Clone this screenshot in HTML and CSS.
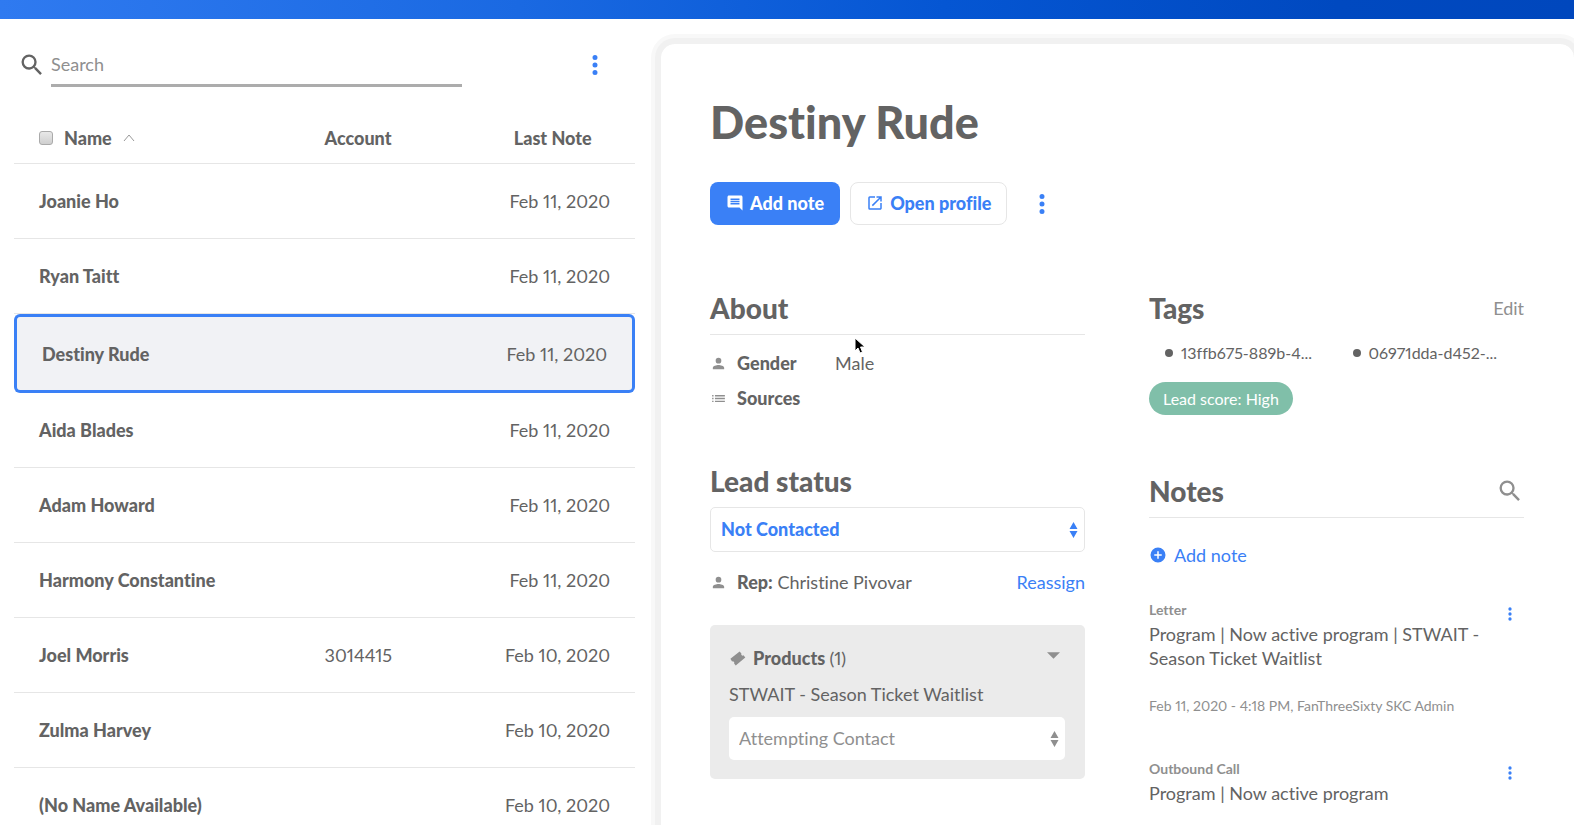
FILE: index.html
```html
<!DOCTYPE html>
<html lang="en">
<head>
    <meta charset="UTF-8">
    <meta name="viewport" content="width=device-width, initial-scale=1.0">
    <title>Leads</title>
    <link rel="stylesheet" href="styles.css">
</head>
<body>
    <svg class="sprite" aria-hidden="true">
        <symbol id="icon-search" viewBox="0 0 24 24">
            <path d="M15.5 14h-.79l-.28-.27A6.47 6.47 0 0 0 16 9.5 6.5 6.5 0 1 0 9.5 16c1.61 0 3.09-.59 4.23-1.57l.27.28v.79l5 4.99L20.49 19l-4.99-5zm-6 0a4.5 4.5 0 1 1 0-9 4.5 4.5 0 0 1 0 9z"/>
        </symbol>
        <symbol id="icon-more" viewBox="0 0 24 24">
            <path d="M12 8a2 2 0 1 0 0-4 2 2 0 0 0 0 4zm0 2a2 2 0 1 0 0 4 2 2 0 0 0 0-4zm0 6a2 2 0 1 0 0 4 2 2 0 0 0 0-4z"/>
        </symbol>
        <symbol id="icon-person" viewBox="0 0 24 24">
            <path d="M12 12a4 4 0 1 0 0-8 4 4 0 0 0 0 8zm0 2c-2.67 0-8 1.34-8 4v2h16v-2c0-2.66-5.33-4-8-4z"/>
        </symbol>
        <symbol id="icon-list" viewBox="0 0 24 24">
            <path d="M3 13h2v-2H3v2zm0 4h2v-2H3v2zm0-8h2V7H3v2zm4 4h14v-2H7v2zm0 4h14v-2H7v2zM7 7v2h14V7H7z"/>
        </symbol>
        <symbol id="icon-note" viewBox="0 0 24 24">
            <path d="M21.99 4c0-1.1-.89-2-1.99-2H4c-1.1 0-2 .9-2 2v12c0 1.1.9 2 2 2h14l4 4-.01-18zM18 14H6v-2h12v2zm0-3H6V9h12v2zm0-3H6V6h12v2z"/>
        </symbol>
        <symbol id="icon-open" viewBox="0 0 24 24">
            <path d="M19 19H5V5h7V3H5a2 2 0 0 0-2 2v14a2 2 0 0 0 2 2h14c1.1 0 2-.9 2-2v-7h-2v7zM14 3v2h3.59l-9.83 9.83 1.41 1.41L19 6.41V10h2V3h-7z"/>
        </symbol>
        <symbol id="icon-add" viewBox="0 0 24 24">
            <path d="M12 2a10 10 0 1 0 0 20 10 10 0 0 0 0-20zm5 11h-4v4h-2v-4H7v-2h4V7h2v4h4v2z"/>
        </symbol>
        <symbol id="icon-ticket" viewBox="0 0 24 24">
            <path d="M2 12.500 15 2l2.500 3a2 2 0 0 0 3 2.500L23 10.500 9.500 22l-2.300-3a2 2 0 0 0-2.900-2.600z"/>
        </symbol>
    </svg>

    <header class="topbar"></header>

    <div class="layout">
        <section class="leads">
            <div class="toolbar">
                <label class="search">
                    <svg class="search-icon"><use href="#icon-search"/></svg>
                    <input type="text" placeholder="Search" aria-label="Search">
                </label>
                <button class="icon-btn" aria-label="List options">
                    <svg class="icon-more"><use href="#icon-more"/></svg>
                </button>
            </div>

            <table class="leads-table">
                <thead>
                    <tr>
                        <th class="col-name">
                            <div class="name-head">
                                <input type="checkbox" aria-label="Select all">
                                Name
                                <svg class="sort" viewBox="0 0 12 8"><path d="M1 7l5-6 5 6"/></svg>
                            </div>
                        </th>
                        <th class="col-account">Account</th>
                        <th class="col-date">Last Note</th>
                    </tr>
                </thead>
                <tbody>
                    <tr><td>Joanie Ho</td><td></td><td>Feb 11, 2020</td></tr>
                    <tr><td>Ryan Taitt</td><td></td><td>Feb 11, 2020</td></tr>
                    <tr class="selected"><td>Destiny Rude</td><td></td><td>Feb 11, 2020</td></tr>
                    <tr><td>Aida Blades</td><td></td><td>Feb 11, 2020</td></tr>
                    <tr><td>Adam Howard</td><td></td><td>Feb 11, 2020</td></tr>
                    <tr><td>Harmony Constantine</td><td></td><td>Feb 11, 2020</td></tr>
                    <tr><td>Joel Morris</td><td>3014415</td><td>Feb 10, 2020</td></tr>
                    <tr><td>Zulma Harvey</td><td></td><td>Feb 10, 2020</td></tr>
                    <tr><td>(No Name Available)</td><td></td><td>Feb 10, 2020</td></tr>
                </tbody>
            </table>
        </section>

        <main class="panel">
            <h1>Destiny Rude</h1>
            <div class="actions">
                <button class="btn btn-primary"><svg><use href="#icon-note"/></svg>Add note</button>
                <button class="btn btn-open"><svg><use href="#icon-open"/></svg>Open profile</button>
                <button class="icon-btn" aria-label="More actions">
                    <svg class="icon-more"><use href="#icon-more"/></svg>
                </button>
            </div>

            <div class="columns">
                <div class="column">
                    <section class="about">
                        <h2 class="ruled">About</h2>
                        <dl class="facts">
                            <dt><svg class="fact-icon"><use href="#icon-person"/></svg>Gender</dt>
                            <dd>Male</dd>
                            <dt><svg class="fact-icon"><use href="#icon-list"/></svg>Sources</dt>
                            <dd></dd>
                        </dl>
                    </section>

                    <section class="status">
                        <h2>Lead status</h2>
                        <div class="select">
                            <select aria-label="Lead status">
                                <option>Not Contacted</option>
                            </select>
                            <svg viewBox="0 0 8 18"><path d="M0 8l4-7 4 7zM0 10l4 7 4-7z"/></svg>
                        </div>
                        <div class="rep">
                            <svg class="fact-icon"><use href="#icon-person"/></svg>
                            <span><b>Rep:</b> Christine Pivovar</span>
                            <a href="#">Reassign</a>
                        </div>
                    </section>

                    <section class="products">
                        <div class="products-head">
                            <svg class="ticket"><use href="#icon-ticket"/></svg>
                            <h3>Products <span>(1)</span></h3>
                            <button class="collapse" aria-label="Collapse products">
                                <svg viewBox="0 0 12 6"><path d="M0 0h12L6 6z"/></svg>
                            </button>
                        </div>
                        <p>STWAIT - Season Ticket Waitlist</p>
                        <div class="select select-plain">
                            <select aria-label="Product status">
                                <option>Attempting Contact</option>
                            </select>
                            <svg viewBox="0 0 8 18"><path d="M0 8l4-7 4 7zM0 10l4 7 4-7z"/></svg>
                        </div>
                    </section>
                </div>

                <div class="column">
                    <section class="tags">
                        <div class="section-head">
                            <h2>Tags</h2>
                            <a class="edit" href="#">Edit</a>
                        </div>
                        <ul class="tag-list">
                            <li>13ffb675-889b-4...</li>
                            <li>06971dda-d452-...</li>
                        </ul>
                        <span class="score">Lead score: High</span>
                    </section>

                    <section class="notes">
                        <div class="section-head ruled">
                            <h2>Notes</h2>
                            <button class="icon-btn" aria-label="Search notes">
                                <svg class="notes-search"><use href="#icon-search"/></svg>
                            </button>
                        </div>
                        <a class="add-note" href="#"><svg><use href="#icon-add"/></svg>Add note</a>

                        <article class="note">
                            <div class="note-body">
                                <h4>Letter</h4>
                                <p>Program | Now active program | STWAIT - Season Ticket Waitlist</p>
                                <small>Feb 11, 2020 - 4:18 PM, FanThreeSixty SKC Admin</small>
                            </div>
                            <button class="icon-btn" aria-label="Note options">
                                <svg class="icon-more-small"><use href="#icon-more"/></svg>
                            </button>
                        </article>
                        <article class="note">
                            <div class="note-body">
                                <h4>Outbound Call</h4>
                                <p>Program | Now active program</p>
                            </div>
                            <button class="icon-btn" aria-label="Note options">
                                <svg class="icon-more-small"><use href="#icon-more"/></svg>
                            </button>
                        </article>
                    </section>
                </div>
            </div>
        </main>
    </div>

    <!-- mouse pointer -->
    <svg class="pointer" viewBox="0 0 12 18"><path d="M1 1v13l3-3 2 5 2.500-1-2-5H11z"/></svg>
</body>
</html>
```

FILE: styles.css
```css
* {
    margin: 0;
    padding: 0;
    box-sizing: border-box;
}

body {
    height: 100vh;
    display: flex;
    flex-direction: column;
    overflow: hidden;
    background: #fff;
    color: #636363;
    font-family: Lato, "Liberation Sans", sans-serif;
    font-size: 18px;
    line-height: 24px;
    font-variant-ligatures: none;
    font-variant-numeric: proportional-nums;
}

button,
input,
select {
    font: inherit;
    font-variant-ligatures: none;
    color: inherit;
    border: none;
    background: none;
}

button {
    cursor: pointer;
}

svg {
    display: block;
    flex: none;
    fill: currentColor;
}

a {
    color: #3a80f6;
    text-decoration: none;
}

.sprite {
    position: absolute;
    width: 0;
    height: 0;
}

.topbar {
    flex: none;
    height: 19px;
    background: linear-gradient(90deg, #2f7af0 0%, #1a69e2 33%, #0556d3 60%, #0049c0 85%, #0047bd 100%);
}

.layout {
    flex: 1;
    min-height: 0;
    display: flex;
}

.icon-btn {
    color: #3a80f6;
}

.icon-more {
    width: 30px;
    height: 30px;
}

/* Lead list */
.leads {
    flex: 0 0 42%;
    padding: 24px 26px 0 14px;
}

.toolbar {
    display: flex;
    align-items: center;
    justify-content: space-between;
    padding: 0 25px 0 4px;
}

.search {
    width: 75%;
    display: flex;
    align-items: center;
    gap: 5px;
}

.search-icon {
    width: 28px;
    height: 28px;
}

.search input {
    flex: 1;
    min-width: 0;
    height: 44px;
    border-bottom: 3px solid #acacac;
    outline: none;
}

.search input::placeholder {
    color: #8f8f8f;
    opacity: 1;
}

.leads-table {
    width: 100%;
    margin-top: 26px;
    table-layout: fixed;
    border-collapse: separate;
    border-spacing: 0;
}

.leads-table th {
    height: 51px;
    border-bottom: 1px solid #e6e6e6;
    text-align: left;
    font-weight: 900;
}

.leads-table td {
    height: 75px;
    border-bottom: 1px solid #e6e6e6;
}

.col-name {
    width: 50%;
    padding-left: 25px;
}

.col-account {
    width: 25%;
}

.col-date {
    width: 25%;
    padding-left: 34px;
}

.name-head {
    display: flex;
    align-items: center;
    gap: 11px;
}

.name-head input {
    appearance: none;
    width: 14px;
    height: 14px;
    border: 1px solid #aaa;
    border-radius: 3px;
    background: linear-gradient(#e8e8e8, #cfcfcf);
}

.sort {
    width: 12px;
    height: 8px;
    fill: none;
    stroke: #999;
}

.leads-table td:first-child {
    padding-left: 25px;
    font-weight: 900;
}

.leads-table td:last-child {
    padding-right: 25px;
    text-align: right;
}

.leads-table .selected td {
    height: 79px;
    border-top: 3px solid #3a80f6;
    border-bottom: 3px solid #3a80f6;
    background: #f1f2f5;
}

.leads-table .selected td:first-child {
    border-left: 3px solid #3a80f6;
    border-radius: 6px 0 0 6px;
}

.leads-table .selected td:last-child {
    border-right: 3px solid #3a80f6;
    border-radius: 0 6px 6px 0;
}

/* Profile panel */
.panel {
    flex: 1;
    min-width: 0;
    margin-top: 25px;
    padding: 48px 50px 0 49px;
    border-radius: 14px 14px 0 0;
    box-shadow: 0 0 0 6px #f1f1f1, 0 0 0 10px #f8f8f8;
}

h1 {
    font-size: 45px;
    font-weight: 900;
    line-height: 60px;
}

h2 {
    font-size: 28px;
    font-weight: 900;
    line-height: 36px;
}

.actions {
    display: flex;
    align-items: center;
    margin-top: 30px;
}

.btn {
    height: 43px;
    display: flex;
    align-items: center;
    gap: 6px;
    padding: 0 16px 2px;
    border-radius: 8px;
    font-weight: 900;
}

.btn svg {
    width: 18px;
    height: 18px;
}

.btn-primary {
    background: #3a80f6;
    color: #fff;
}

.btn-open {
    margin-left: 10px;
    padding: 0 15px 2px;
    border: 1px solid #e6e6e6;
    color: #3a80f6;
}

.actions .icon-btn {
    margin-left: 20px;
}

.columns {
    display: grid;
    grid-template-columns: 1fr 1fr;
    gap: 64px;
    margin-top: 65px;
}

.ruled {
    padding-bottom: 8px;
    border-bottom: 1px solid #e6e6e6;
}

.facts {
    display: grid;
    grid-template-columns: 125px 1fr;
    row-gap: 11px;
    margin-top: 16px;
}

.facts dt {
    display: flex;
    align-items: center;
    gap: 10px;
    font-weight: 900;
}

.fact-icon {
    width: 17px;
    height: 17px;
    color: #8f8f8f;
}

.status {
    margin-top: 53px;
}

.select {
    display: flex;
    align-items: center;
    position: relative;
    height: 45px;
    margin-top: 8px;
    border: 1px solid #e6e6e6;
    border-radius: 5px;
    color: #3a80f6;
    font-weight: 900;
}

.select select {
    appearance: none;
    width: 100%;
    height: 100%;
    padding: 0 30px 2px 10px;
    outline: none;
}

.select svg {
    position: absolute;
    right: 6px;
    width: 9px;
    height: 18px;
    pointer-events: none;
}

.rep {
    display: flex;
    align-items: center;
    gap: 10px;
    margin-top: 18px;
}

.rep a {
    margin-left: auto;
}

b {
    font-weight: 900;
}

.products {
    margin-top: 31px;
    padding: 21px 20px 19px 19px;
    border-radius: 5px;
    background: #ebebeb;
}

.products-head {
    display: flex;
    align-items: center;
    gap: 7px;
}

.ticket {
    width: 17px;
    height: 17px;
    color: #8f8f8f;
}

h3 {
    font-size: 18px;
    font-weight: 900;
}

h3 span {
    font-weight: 400;
}

.collapse {
    margin-left: auto;
    padding: 0 5px 6px 0;
    color: #8f8f8f;
}

.collapse svg {
    width: 13px;
    height: 7px;
}

.products p {
    margin-top: 12px;
}

.select-plain {
    height: 43px;
    margin-top: 11px;
    border: none;
    background: #fff;
    color: #8f8f8f;
    font-weight: 400;
}

.section-head {
    display: flex;
    align-items: center;
    justify-content: space-between;
}

.edit {
    color: #8f8f8f;
}

.tag-list {
    display: grid;
    grid-template-columns: 1fr 1fr;
    margin-top: 15px;
    list-style: none;
    font-size: 16px;
}

.tag-list li {
    display: flex;
    align-items: center;
    gap: 8px;
    padding-left: 16px;
}

.tag-list li::before {
    content: "";
    width: 8px;
    height: 8px;
    border-radius: 50%;
    background: #636363;
}

.score {
    display: inline-block;
    margin-top: 17px;
    padding: 0 14px;
    border-radius: 17px;
    background: #80bfa9;
    color: #fff;
    font-size: 16px;
    line-height: 33px;
}

.notes {
    margin-top: 58px;
}

.notes-search {
    width: 28px;
    height: 28px;
    color: #8f8f8f;
}

.add-note {
    display: flex;
    align-items: center;
    gap: 7px;
    margin-top: 25px;
}

.add-note svg {
    width: 18px;
    height: 18px;
}

.note {
    display: flex;
    align-items: flex-start;
    justify-content: space-between;
    margin-top: 31px;
    padding: 0 4px 8px 0;
}

h4 {
    font-size: 14px;
    font-weight: 700;
    color: #8f8f8f;
}

small {
    display: block;
    margin-top: 24px;
    font-size: 14px;
    color: #8f8f8f;
}

.icon-more-small {
    width: 20px;
    height: 20px;
    margin-top: 6px;
}

.pointer {
    position: absolute;
    left: 854px;
    top: 337px;
    width: 12px;
    height: 18px;
    fill: #000;
    stroke: #fff;
}
```
